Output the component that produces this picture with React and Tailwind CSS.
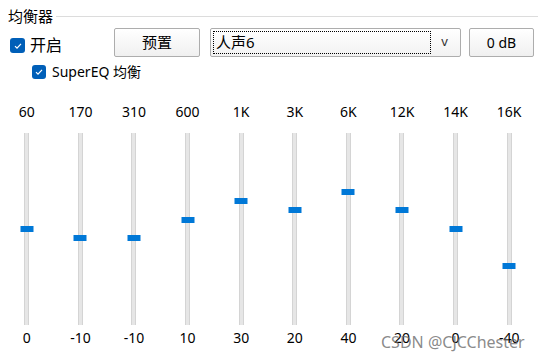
import React from 'react';

const bands = [
  { freq: '60', value: 0 },
  { freq: '170', value: -10 },
  { freq: '310', value: -10 },
  { freq: '600', value: 10 },
  { freq: '1K', value: 30 },
  { freq: '3K', value: 20 },
  { freq: '6K', value: 40 },
  { freq: '12K', value: 20 },
  { freq: '14K', value: 0 },
  { freq: '16K', value: -40 },
];

function Check({ size }) {
  return (
    <span
      className={`flex items-center justify-center rounded-[3px] bg-[#005fb8] ${size === 'sm' ? 'w-[14px] h-[14px]' : 'w-[15px] h-[15px]'}`}
    >
      <svg width="10" height="10" viewBox="0 0 10 10" fill="none" stroke="white" strokeWidth="1.2">
        <path d="M2 5.2l2 2 4-4.4" />
      </svg>
    </span>
  );
}

function Band({ freq, value }) {
  const top = 93 - value * 0.93;
  return (
    <div className="flex flex-col items-center">
      <div className="h-[20px] leading-[20px] text-[14px]">{freq}</div>
      <div className="relative mt-[11px] h-[192px] w-[5px] bg-[#e6e6e6] border-x border-[#d4d4d4]">
        <div
          className="absolute left-1/2 -translate-x-1/2 w-[13px] h-[6px] bg-[#0078d7]"
          style={{ top }}
        />
      </div>
      <div className="mt-[3px] h-[20px] leading-[20px] text-[14px]">{value}</div>
    </div>
  );
}

export default function App() {
  return (
    <div
      className="relative w-[538px] h-[359px] overflow-hidden bg-white text-black"
      style={{ fontFamily: '"Segoe UI", "Noto Sans", "Noto Sans CJK SC", sans-serif' }}
    >
      <div className="flex items-center pt-[7px] pl-[8px]">
        <span className="text-[15px] leading-[18px]">均衡器</span>
        <div className="flex-1 h-px bg-[#dcdcdc] ml-[3px]" />
      </div>

      <div className="flex items-start mt-[3px] pl-[10px]">
        <div className="flex items-center w-[104px] mt-[9px] gap-[5px]">
          <Check />
          <span className="text-[16px] leading-[17px]">开启</span>
        </div>
        <button className="w-[86px] h-[29px] border border-[#adadad] rounded-[2px] bg-gradient-to-b from-white to-[#f0f0f0] text-[15px]">
          预置
        </button>
        <div className="ml-[10px] w-[251px] h-[29px] border border-[#adadad] rounded-[2px] bg-gradient-to-b from-white to-[#f2f2f2] flex items-center p-[2px]">
          <div className="flex-1 h-full border border-dotted border-black flex items-center pl-[2px] text-[15px]">
            人声6
          </div>
          <span className="w-[27px] text-center text-[13px] text-[#333] pb-[2px]">v</span>
        </div>
        <button className="ml-[8px] w-[65px] h-[29px] border border-[#adadad] rounded-[2px] bg-gradient-to-b from-white to-[#f0f0f0] text-[14px]">
          0 dB
        </button>
      </div>

      <div className="flex items-center mt-[6px] h-[18px] pl-[32px] gap-[6px]">
        <Check size="sm" />
        <span className="text-[14px] leading-[18px]">SuperEQ 均衡</span>
      </div>

      <div className="grid grid-cols-10 w-[536px] mt-[21px]">
        {bands.map((b) => (
          <Band key={b.freq} freq={b.freq} value={b.value} />
        ))}
      </div>

      <div className="absolute left-[381px] top-[332px] text-[16px] leading-[20px] text-[#6b6b6b]/80">
        CSDN @CJCChester
      </div>
    </div>
  );
}
